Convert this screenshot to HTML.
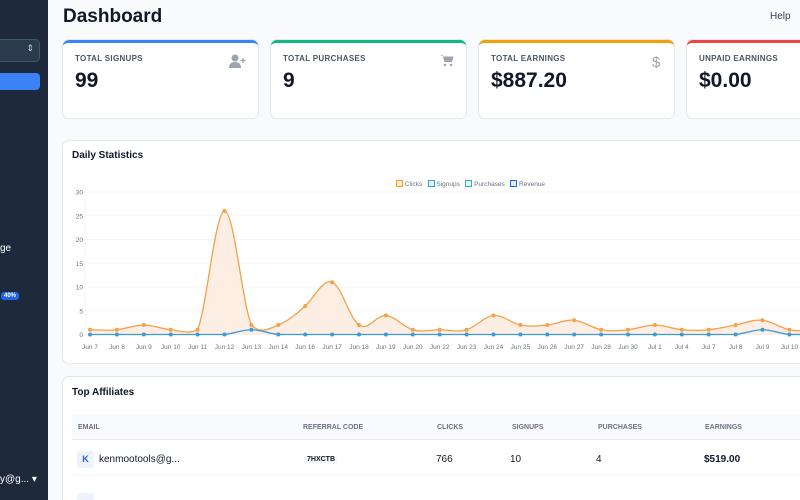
<!DOCTYPE html>
<html style="width:800px;height:500px;overflow:hidden"><head><meta charset="utf-8"><style>
*{box-sizing:border-box;margin:0;padding:0}
body{width:800px;height:500px;overflow:hidden;background:#f8fafc;font-family:"Liberation Sans",sans-serif;color:#111827;position:relative}
.side{position:absolute;left:0;top:0;width:48px;height:500px;background:#1e293b}
.sel{position:absolute;left:-10px;top:39px;width:50px;height:23px;border:1px solid #3b5a6b;border-radius:5px;background:#2b3a4c}
.btn{position:absolute;left:-10px;top:73px;width:50px;height:17px;border-radius:4px;background:#3b82f6}
h1{position:absolute;left:63px;top:6px;font-size:19px;font-weight:700;color:#111827}
.help{position:absolute;left:770px;top:11px;font-size:10px;color:#374151}
.card{position:absolute;top:40px;width:195px;height:78px;background:#fff;border-radius:6px;border-top:3px solid;box-shadow:0 0 0 1px #e5e7eb}
.card .l{position:absolute;left:12px;top:11px;font-size:8px;font-weight:700;color:#4b5563;letter-spacing:.3px}
.card .v{position:absolute;left:12px;top:26px;font-size:21px;font-weight:700;color:#111827}
.card svg{position:absolute;right:12px;top:11px}
.panel{position:absolute;left:63px;width:760px;background:#fff;border-radius:6px;box-shadow:0 0 0 1px #e5e7eb}
.pt{position:absolute;left:9px;font-size:10px;font-weight:700}
.th{position:absolute;top:414px;left:72px;width:740px;height:26px;background:#f8fafc;border-bottom:1px solid #e5e7eb}
.th span,.row span{position:absolute;font-size:7px;font-weight:700;color:#6b7280;top:10px}
.row span{font-size:10px;color:#111827;font-weight:400}
</style></head><body>
<div class="side"><div class="sel"><span style="position:absolute;right:5px;top:3px;color:#cbd5e1;font-size:9px">⇕</span></div><div class="btn"></div>
<div style="position:absolute;left:0;top:243px;color:#fff;font-size:10px">ge</div>
<div style="position:absolute;left:1px;top:292px;background:#2563eb;color:#fff;font-size:6px;font-weight:700;padding:1px 3px;border-radius:3px">40%</div>
<div style="position:absolute;left:0;top:474px;color:#fff;font-size:10px">y@g... ▾</div></div>
<h1>Dashboard</h1><div class="help">Help</div>
<div class="card" style="left:63px;border-color:#3b82f6"><div class="l">TOTAL SIGNUPS</div><div class="v">99</div>
<svg width="17" height="14" viewBox="0 0 17 14"><circle cx="6" cy="4" r="3.5" fill="#9ca3af"/><path d="M0 14 Q0 8 6 8 Q12 8 12 14Z" fill="#9ca3af"/><path d="M14 4v5M11.5 6.5h5" stroke="#9ca3af" stroke-width="1.3"/></svg></div>
<div class="card" style="left:271px;border-color:#10b981"><div class="l">TOTAL PURCHASES</div><div class="v">9</div>
<svg width="14" height="13" viewBox="0 0 14 13"><path d="M0 1h2.5l2 7h7.5l1.5-5.5H3.5z" fill="#9ca3af"/><circle cx="5" cy="11" r="1.3" fill="#9ca3af"/><circle cx="11" cy="11" r="1.3" fill="#9ca3af"/></svg></div>
<div class="card" style="left:479px;border-color:#f59e0b"><div class="l">TOTAL EARNINGS</div><div class="v">$887.20</div>
<svg width="10" height="15" viewBox="0 0 10 15"><text x="0" y="13" font-size="15" fill="#9ca3af" font-family="Liberation Sans">$</text></svg></div>
<div class="card" style="left:687px;border-color:#ef4444"><div class="l">UNPAID EARNINGS</div><div class="v">$0.00</div></div>
<div class="panel" style="top:141px;height:222px"><div class="pt" style="top:9px">Daily Statistics</div></div>
<div style="position:absolute;left:396px;top:180px;font-size:6.5px;color:#6b7280;white-space:nowrap">
<span style="display:inline-block;width:7px;height:7px;border:1px solid #f59e0b;background:#fdf0e0;vertical-align:-1px"></span> Clicks&nbsp;&nbsp;
<span style="display:inline-block;width:7px;height:7px;border:1px solid #3b9ad9;background:#e6f2fa;vertical-align:-1px"></span> Signups&nbsp;&nbsp;
<span style="display:inline-block;width:7px;height:7px;border:1px solid #2cb5a5;background:#e6f6f4;vertical-align:-1px"></span> Purchases&nbsp;&nbsp;
<span style="display:inline-block;width:7px;height:7px;border:1px solid #2563eb;background:#e8eefc;vertical-align:-1px"></span> Revenue</div>
<svg id="ch" style="position:absolute;left:0;top:0" width="800" height="360"></svg>
<div class="panel" style="top:377px;height:140px"><div class="pt" style="top:10px">Top Affiliates</div></div>
<div class="th"><span style="left:6px">EMAIL</span><span style="left:231px">REFERRAL CODE</span><span style="left:365px">CLICKS</span><span style="left:440px">SIGNUPS</span><span style="left:526px">PURCHASES</span><span style="left:633px">EARNINGS</span></div>
<div class="row" style="position:absolute;top:446px;left:72px;width:740px;height:30px;border-bottom:1px solid #f1f5f9">
<div style="position:absolute;left:5px;top:5px;width:17px;height:17px;background:#eef2fb;border-radius:3px;color:#2563eb;font-size:9px;font-weight:700;text-align:center;line-height:17px">K</div>
<span style="left:27px;top:8px">kenmootools@g...</span><span style="left:233px;top:10px;font-size:7px;font-weight:700;background:#f3f4f6;padding:0 2px">7HXCTB</span><span style="left:364px;top:8px">766</span><span style="left:438px;top:8px">10</span><span style="left:524px;top:8px">4</span><span style="left:632px;top:8px;font-weight:700">$519.00</span></div>
<div style="position:absolute;left:77px;top:493px;width:17px;height:10px;background:#eef2fb;border-radius:3px"></div>
<script>
var L=["Jun 7","Jun 8","Jun 9","Jun 10","Jun 11","Jun 12","Jun 13","Jun 14","Jun 16","Jun 17","Jun 18","Jun 19","Jun 20","Jun 22","Jun 23","Jun 24","Jun 25","Jun 26","Jun 27","Jun 28","Jun 30","Jul 1","Jul 4","Jul 7","Jul 8","Jul 9","Jul 10","x"];
var C=[1,1,2,1,1,26,2,2,6,11,2,4,1,1,1,4,2,2,3,1,1,2,1,1,2,3,1,1];
var S=[0,0,0,0,0,0,1,0,0,0,0,0,0,0,0,0,0,0,0,0,0,0,0,0,0,1,0,0];
var sx=26.9,x0=90,y0=334.5,k=4.75,o="";
function X(i){return x0+i*sx}function Y(v){return y0-v*k}
function cl(y){return Math.min(y,y0)}
for(var v=0;v<=30;v+=5){o+='<line x1="80" x2="800" y1="'+Y(v)+'" y2="'+Y(v)+'" stroke="#f1f3f5" stroke-width="0.7"/><text x="83" y="'+(Y(v)+2.5)+'" font-size="6.5" fill="#6b7280" text-anchor="end" font-family="Liberation Sans">'+v+'</text>'}
o+='<line x1="85" x2="85" y1="190" y2="336" stroke="#f1f3f5"/>';
function P(d){var s="M"+X(0)+","+Y(d[0]);var t=0.2;for(var i=0;i<d.length-1;i++){var p0=d[Math.max(i-1,0)],p1=d[i],p2=d[i+1],p3=d[Math.min(i+2,d.length-1)];s+=" C"+(X(i)+sx*0.35)+","+cl(Y(p1)+(Y(p2)-Y(p0))*t)+" "+(X(i+1)-sx*0.35)+","+cl(Y(p2)-(Y(p3)-Y(p1))*t)+" "+X(i+1)+","+Y(p2)}return s}
var pc=P(C);
o+='<path d="'+pc+' L'+X(27)+','+y0+' L'+X(0)+','+y0+'Z" fill="#fdeee3"/>';
o+='<path d="'+pc+'" fill="none" stroke="#f5a04a" stroke-width="1.3"/>';
o+='<path d="'+P(S)+'" fill="none" stroke="#3b9ad9" stroke-width="1.3"/>';
for(var i=0;i<27;i++){o+='<circle cx="'+X(i)+'" cy="'+Y(C[i])+'" r="2" fill="#f5a04a"/><circle cx="'+X(i)+'" cy="'+Y(S[i])+'" r="2" fill="#3b9ad9"/><text x="'+X(i)+'" y="349" font-size="6.5" fill="#6b7280" text-anchor="middle" font-family="Liberation Sans">'+L[i]+'</text>'}
document.getElementById("ch").innerHTML=o;
</script>
</body></html>
